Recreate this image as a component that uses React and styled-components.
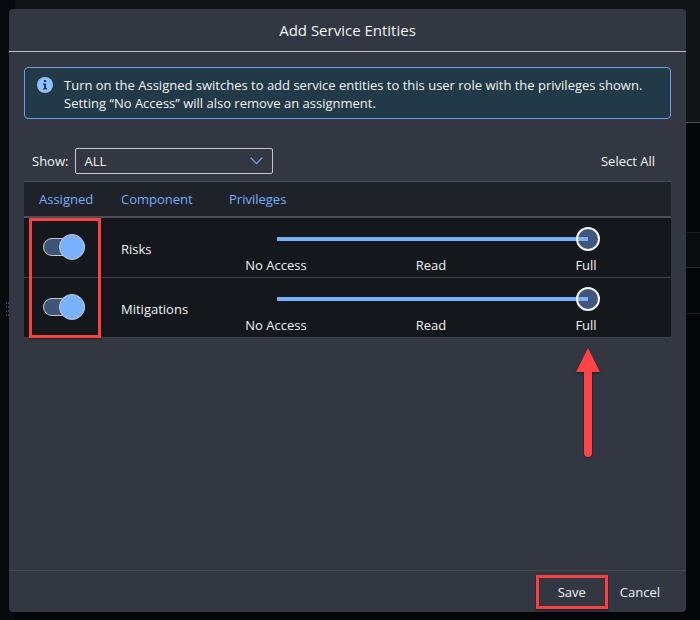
import React, { useState } from "react";
import styled, { createGlobalStyle } from "styled-components";

const GlobalStyle = createGlobalStyle`
  *, *::before, *::after { box-sizing: border-box; }
  body {
    margin: 0;
    background: #050609;
    color: #f1f3f5;
    font: 13px/18px "Open Sans", "Noto Sans", sans-serif;
  }
  button, select, input { font: inherit; color: inherit; }
`;

const Screen = styled.div`
  position: relative;
  display: flex;
  min-height: 100vh;
  padding: 9px 14px 8px 9px;
`;

const Backdrop = styled.div`
  position: absolute;
  inset: 0;
  display: grid;
  grid-template-columns: 15px 1fr;
`;

const SideRail = styled.div`
  display: flex;
  align-items: center;
  justify-content: flex-end;
  padding-right: 6px;
  background: #08090c;
`;

const BackPage = styled.div`
  display: flex;
  flex-direction: column;
`;

const BackBand = styled.div`
  flex: none;
  height: ${(p) => p.$height}px;
  background: ${(p) => p.$tone};
  border-bottom: 1px solid ${(p) => p.$line};
`;

const Dialog = styled.section`
  position: relative;
  flex: 1;
  display: flex;
  flex-direction: column;
  background: #323741;
  border-radius: 4px;
`;

const Header = styled.header`
  padding: 12px 16px 11px;
  border-bottom: 1px solid #b9bcc0;
  text-align: center;
`;

const Title = styled.h1`
  margin: 0;
  font-size: 15px;
  line-height: 19px;
  font-weight: 400;
`;

const Body = styled.div`
  flex: 1;
  padding: 15px 15px 0;
`;

const Notice = styled.div`
  display: flex;
  gap: 11px;
  padding: 8px 12px 6px;
  background: #223947;
  border: 1px solid #6d9de6;
  border-radius: 4px;

  svg { flex: none; margin-top: 1px; }
  p { margin: 0; }
`;

const Toolbar = styled.div`
  display: flex;
  align-items: center;
  gap: 7px;
  padding: 29px 12px 7px 8px;
`;

const SelectWrap = styled.div`
  position: relative;
  width: 198px;
  margin-right: auto;

  svg {
    position: absolute;
    right: 10px;
    top: 9px;
    pointer-events: none;
  }
`;

const Select = styled.select`
  display: block;
  width: 100%;
  height: 26px;
  padding: 0 28px 0 8px;
  appearance: none;
  background: transparent;
  border: 1px solid #c5c8cc;
  border-radius: 2px;

  option { background: #323741; }
`;

const TextButton = styled.button`
  padding: ${(p) => p.$pad || "4px"};
  background: none;
  border: 0;
  line-height: 18px;
  cursor: pointer;
`;

const TableArea = styled.div`
  position: relative;
`;

const Table = styled.table`
  width: 100%;
  table-layout: fixed;
  border-spacing: 0;
  border-top: 1px solid #4b4e53;
  background: #14171b;
`;

const HeadCell = styled.th`
  width: ${(p) => p.$width || "auto"};
  height: 36px;
  padding: 0 0 0 ${(p) => p.$indent || 0}px;
  background: #1f2228;
  border-bottom: 2px solid #4b4e53;
  color: #76aefb;
  font-weight: 400;
  text-align: left;
`;

const Cell = styled.td`
  height: 60px;
  padding: ${(p) => p.$pad || "0"};
  border-bottom: 1px solid #3f4247;
  vertical-align: middle;
`;

const Switch = styled.input`
  display: grid;
  align-items: center;
  width: 42px;
  height: 26px;
  margin: 0;
  appearance: none;
  cursor: pointer;

  &::before, &::after {
    content: "";
    grid-area: 1 / 1;
    border: 1px solid #c4c9d1;
  }
  &::before {
    height: 18px;
    border-radius: 9px;
    background: #2a2f37;
  }
  &::after {
    width: 26px;
    height: 26px;
    border-radius: 50%;
    background: #9aa1ab;
  }
  &:checked::before { background: #3f5578; }
  &:checked::after {
    justify-self: end;
    background: #7ab1ff;
  }
`;

const PrivilegeScale = styled.div`
  display: flex;
  flex-direction: column;
  gap: 5px;
`;

const Slider = styled.input`
  display: block;
  width: auto;
  height: 24px;
  margin: 0 18px 0 21px;
  appearance: none;
  background: linear-gradient(#78b0fb, #78b0fb) 12px 50% /
    calc((100% - 24px) * ${(p) => p.$fill}) 4px no-repeat;
  cursor: pointer;

  &::-webkit-slider-thumb {
    appearance: none;
    width: 24px;
    height: 24px;
    border: 2px solid #f4f5f7;
    border-radius: 50%;
    background: linear-gradient(#78b0fb, #78b0fb) 0 50% / 50% 4px no-repeat #40567a;
  }
`;

const ScaleLabels = styled.div`
  display: flex;
  justify-content: space-between;

  span { width: 64px; text-align: center; }
`;

const Footer = styled.footer`
  display: flex;
  align-items: center;
  justify-content: flex-end;
  gap: 4px;
  height: 42px;
  padding: 1px 18px 0 0;
  border-top: 1px solid #44484f;
`;

const SaveSlot = styled.div`
  position: relative;
`;

const Highlight = styled.div`
  position: absolute;
  inset: ${(p) => p.$inset};
  width: ${(p) => p.$width || "auto"};
  border: 3px solid #f94144;
  box-shadow: 0 1px 2px rgba(0, 0, 0, 0.5);
  pointer-events: none;
`;

const PointerArrow = styled.svg`
  position: absolute;
  top: 166px;
  right: 69px;
  filter: drop-shadow(0 1px 1px rgba(0, 0, 0, 0.5));
  pointer-events: none;
`;

const privileges = ["No Access", "Read", "Full"];

function EntityRow({ name }) {
  const [assigned, setAssigned] = useState(true);
  const [level, setLevel] = useState(2);
  return (
    <tr>
      <Cell $pad="0 0 1px 19px">
        <Switch
          type="checkbox"
          role="switch"
          aria-label={`Assign ${name}`}
          checked={assigned}
          onChange={(e) => setAssigned(e.target.checked)}
        />
      </Cell>
      <Cell $pad="3px 0 0">{name}</Cell>
      <Cell $pad="5px 53px 0 15px">
        <PrivilegeScale>
          <Slider
            type="range"
            min="0"
            max="2"
            aria-label={`${name} privileges`}
            value={level}
            $fill={level / 2}
            onChange={(e) => setLevel(Number(e.target.value))}
          />
          <ScaleLabels>
            {privileges.map((p) => <span key={p}>{p}</span>)}
          </ScaleLabels>
        </PrivilegeScale>
      </Cell>
    </tr>
  );
}

export default function App() {
  return (
    <>
      <GlobalStyle />
      <Screen>
        <Backdrop aria-hidden="true">
          <SideRail>
            <svg width="3" height="16" fill="#26416b">
              {[0, 4, 8, 12].map((y) => (
                <g key={y}>
                  <rect x="0" y={y} width="1" height="2" />
                  <rect x="2" y={y} width="1" height="2" />
                </g>
              ))}
            </svg>
          </SideRail>
          <BackPage>
            <BackBand $height={123} $tone="#121418" $line="#4a4c50" />
            <BackBand $height={110} $tone="#050609" $line="#1b1d20" />
            <BackBand $height={35} $tone="#0a0b0e" $line="#2a2c2f" />
            <BackBand $height={46} $tone="#050609" $line="#1b1d20" />
          </BackPage>
        </Backdrop>

        <Dialog role="dialog" aria-labelledby="dialog-title">
          <Header>
            <Title id="dialog-title">Add Service Entities</Title>
          </Header>
          <Body>
            <Notice>
              <svg width="16" height="16" viewBox="0 0 16 16">
                <circle cx="8" cy="8" r="8" fill="#8fc0ff" />
                <path d="M6.9 3h2.2v2H6.9zM6 6.4h3.1v4.9H10v1.3H6v-1.3h1.1V7.7H6z" fill="#223947" />
              </svg>
              <p>
                Turn on the Assigned switches to add service entities to this user role with the privileges shown.
                <br />
                Setting “No Access” will also remove an assignment.
              </p>
            </Notice>
            <Toolbar>
              <label htmlFor="show">Show:</label>
              <SelectWrap>
                <Select id="show" defaultValue="ALL">
                  <option>ALL</option>
                </Select>
                <svg width="13" height="8" viewBox="0 0 13 8" fill="none" stroke="#6fa5f0" strokeWidth="1.3">
                  <path d="M0.8 0.8 6.5 6.6 12.2 0.8" />
                </svg>
              </SelectWrap>
              <TextButton type="button">Select All</TextButton>
            </Toolbar>
            <TableArea>
              <Table>
                <thead>
                  <tr>
                    <HeadCell $width="97px" $indent={15}>Assigned</HeadCell>
                    <HeadCell $width="108px">Component</HeadCell>
                    <HeadCell>Privileges</HeadCell>
                  </tr>
                </thead>
                <tbody>
                  <EntityRow name="Risks" />
                  <EntityRow name="Mitigations" />
                </tbody>
              </Table>
              <Highlight $inset="37px auto 0 5px" $width="72px" />
              <PointerArrow width="28" height="112" viewBox="0 0 28 112" fill="#ff4346">
                <path d="M14 1 26 25H18V106a4 4 0 0 1-8 0V25H2z" />
              </PointerArrow>
            </TableArea>
          </Body>
          <Footer>
            <SaveSlot>
              <TextButton type="button" $pad="4px 22px">Save</TextButton>
              <Highlight $inset="-4px 0" />
            </SaveSlot>
            <TextButton type="button" $pad="4px 8px">Cancel</TextButton>
          </Footer>
        </Dialog>
      </Screen>
    </>
  );
}
